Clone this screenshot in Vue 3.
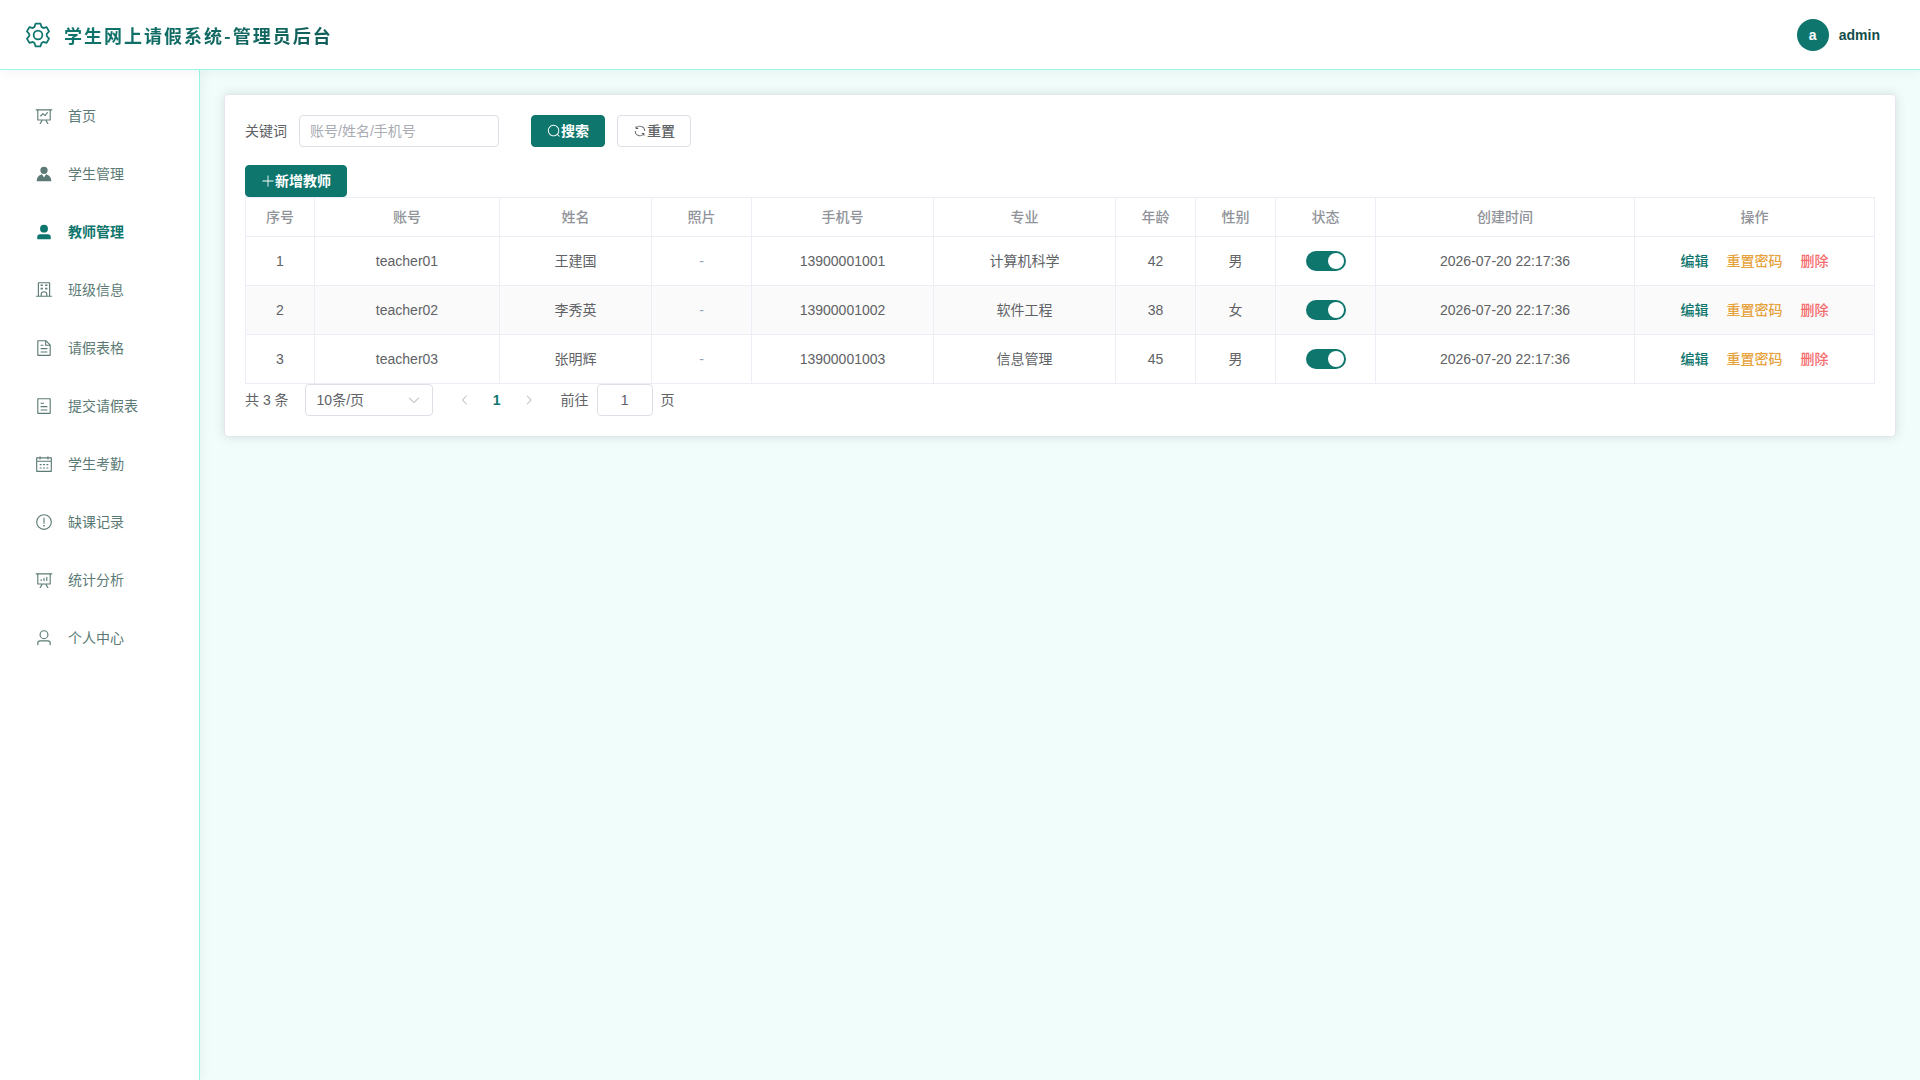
<script setup>
import { ref } from 'vue';

const icons = {
  setting: 'M600.704 64a32 32 0 0 1 30.464 22.208l35.2 109.376c14.784 7.232 28.928 15.36 42.432 24.512l112.384-24.192a32 32 0 0 1 34.432 15.36L944.32 364.8a32 32 0 0 1-4.032 37.504l-77.12 85.12a357.12 357.12 0 0 1 0 49.024l77.12 85.248a32 32 0 0 1 4.032 37.504l-88.704 153.6a32 32 0 0 1-34.432 15.296L708.8 803.904c-13.44 9.088-27.648 17.28-42.368 24.512l-35.264 109.376A32 32 0 0 1 600.704 960H423.296a32 32 0 0 1-30.464-22.208L357.696 828.48a351.616 351.616 0 0 1-42.56-24.64l-112.32 24.256a32 32 0 0 1-34.432-15.36L79.68 659.2a32 32 0 0 1 4.032-37.504l77.12-85.248a357.12 357.12 0 0 1 0-48.896l-77.12-85.248A32 32 0 0 1 79.68 364.8l88.704-153.6a32 32 0 0 1 34.432-15.296l112.32 24.256c13.568-9.152 27.776-17.408 42.56-24.64l35.2-109.312A32 32 0 0 1 423.232 64H600.64zm-23.424 64H446.72l-36.352 113.088-24.512 11.968a294.113 294.113 0 0 0-34.816 20.096l-22.656 15.36-116.224-25.088-65.28 113.152 79.68 88.192-1.92 27.136a293.12 293.12 0 0 0 0 40.192l1.92 27.136-79.808 88.192 65.344 113.152 116.224-25.024 22.656 15.296a294.113 294.113 0 0 0 34.816 20.096l24.512 11.968L446.72 896h130.688l36.48-113.152 24.448-11.904a288.282 288.282 0 0 0 34.752-20.096l22.592-15.296 116.288 25.024 65.28-113.152-79.744-88.192 1.92-27.136a293.12 293.12 0 0 0 0-40.256l-1.92-27.136 79.808-88.128-65.344-113.152-116.288 24.96-22.592-15.232a287.616 287.616 0 0 0-34.752-20.096l-24.448-11.904L577.344 128zM512 320a192 192 0 1 1 0 384 192 192 0 0 1 0-384zm0 64a128 128 0 1 0 0 256 128 128 0 0 0 0-256z',
  dataLine: 'M359.168 768H160a32 32 0 0 1-32-32V192H64a32 32 0 0 1 0-64h896a32 32 0 1 1 0 64h-64v544a32 32 0 0 1-32 32H665.216l110.848 192h-73.856L591.36 768H433.024L322.176 960H248.32l110.848-192zM832 192H192v512h640V192zM342.656 534.656a32 32 0 1 1-45.312-45.312L444.992 341.76l125.44 94.08L679.04 300.032a32 32 0 1 1 49.92 39.936L581.632 524.224 451.008 426.24 342.656 534.592z',
  avatar: 'M628.736 528.896A416 416 0 0 1 928 928H96a415.872 415.872 0 0 1 299.264-399.104L512 704l116.736-175.104zM720 304a208 208 0 1 1-416 0 208 208 0 0 1 416 0z',
  userFilled: 'M288 320a224 224 0 1 0 448 0 224 224 0 1 0-448 0zm544 608H160a32 32 0 0 1-32-32v-96a160 160 0 0 1 160-160h448a160 160 0 0 1 160 160v96a32 32 0 0 1-32 32z',
  school: 'M224 128v704h576V128H224zm-32-64h640a32 32 0 0 1 32 32v768a32 32 0 0 1-32 32H192a32 32 0 0 1-32-32V96a32 32 0 0 1 32-32zM64 832h896v64H64zm256-640h128v96H320zM384 832h256v-64a128 128 0 1 0-256 0zm128-256a192 192 0 0 1 192 192v128H320V768a192 192 0 0 1 192-192zM320 384h128v96H320zm256-192h128v96H576zm0 192h128v96H576z',
  document: 'M832 384H576V128H192v768h640V384zm-26.496-64L640 154.496V320h165.504zM160 64h480l256 256v608a32 32 0 0 1-32 32H160a32 32 0 0 1-32-32V96a32 32 0 0 1 32-32zm160 448h384v64H320v-64zm0-192h160v64H320v-64zm0 384h384v64H320v-64z',
  tickets: 'M192 128v768h640V128H192zm-32-64h704a32 32 0 0 1 32 32v832a32 32 0 0 1-32 32H160a32 32 0 0 1-32-32V96a32 32 0 0 1 32-32zm160 448h384v64H320v-64zm0-192h192v64H320v-64zm0 384h384v64H320v-64z',
  calendar: 'M128 384v512h768V192H768v32a32 32 0 1 1-64 0v-32H320v32a32 32 0 0 1-64 0v-32H128v128h768v64H128zm192-256h384V96a32 32 0 1 1 64 0v32h160a32 32 0 0 1 32 32v768a32 32 0 0 1-32 32H96a32 32 0 0 1-32-32V160a32 32 0 0 1 32-32h160V96a32 32 0 0 1 64 0v32zm-32 384h64a32 32 0 0 1 0 64h-64a32 32 0 0 1 0-64zm0 192h64a32 32 0 1 1 0 64h-64a32 32 0 1 1 0-64zm192-192h64a32 32 0 0 1 0 64h-64a32 32 0 0 1 0-64zm0 192h64a32 32 0 1 1 0 64h-64a32 32 0 1 1 0-64zm192-192h64a32 32 0 1 1 0 64h-64a32 32 0 1 1 0-64zm0 192h64a32 32 0 1 1 0 64h-64a32 32 0 1 1 0-64z',
  warning: 'M512 64a448 448 0 1 1 0 896 448 448 0 0 1 0-896zm0 832a384 384 0 0 0 0-768 384 384 0 0 0 0 768zm48-176a48 48 0 1 1-96 0 48 48 0 0 1 96 0zm-48-464a32 32 0 0 1 32 32v288a32 32 0 0 1-64 0V288a32 32 0 0 1 32-32z',
  dataAnalysis: 'M665.216 768l110.848 192h-73.856L591.36 768H433.024L322.176 960H248.32l110.848-192H160a32 32 0 0 1-32-32V192H64a32 32 0 0 1 0-64h896a32 32 0 1 1 0 64h-64v544a32 32 0 0 1-32 32H665.216zM832 192H192v512h640V192zM352 448a32 32 0 0 1 32 32v64a32 32 0 0 1-64 0v-64a32 32 0 0 1 32-32zm160-64a32 32 0 0 1 32 32v128a32 32 0 0 1-64 0V416a32 32 0 0 1 32-32zm160-64a32 32 0 0 1 32 32v192a32 32 0 1 1-64 0V352a32 32 0 0 1 32-32z',
  user: 'M512 512a192 192 0 1 0 0-384 192 192 0 0 0 0 384zm0 64a256 256 0 1 1 0-512 256 256 0 0 1 0 512zm320 320v-96a96 96 0 0 0-96-96H288a96 96 0 0 0-96 96v96a32 32 0 1 1-64 0v-96a160 160 0 0 1 160-160h448a160 160 0 0 1 160 160v96a32 32 0 1 1-64 0z',
  search: 'M795.904 750.72l124.992 124.928a32 32 0 0 1-45.248 45.248L750.656 795.904a416 416 0 1 1 45.248-45.248zM480 832a352 352 0 1 0 0-704 352 352 0 0 0 0 704z',
  refresh: 'M771.776 794.88A384 384 0 0 1 128 512h64a320 320 0 0 0 555.712 216.448H654.72a32 32 0 1 1 0-64h149.056a32 32 0 0 1 32 32v148.928a32 32 0 1 1-64 0v-50.56zM276.288 295.616h92.992a32 32 0 0 1 0 64H220.16a32 32 0 0 1-32-32V178.56a32 32 0 0 1 64 0v50.56A384 384 0 0 1 896.128 512h-64a320 320 0 0 0-555.776-216.384z',
  plus: 'M480 480V128a32 32 0 0 1 64 0v352h352a32 32 0 1 1 0 64H544v352a32 32 0 1 1-64 0V544H128a32 32 0 0 1 0-64h352z',
  arrowDown: 'M831.872 340.864 512 652.672 192.128 340.864a30.592 30.592 0 0 0-42.752 0 29.12 29.12 0 0 0 0 41.6L489.664 714.24a32 32 0 0 0 44.672 0l340.288-331.712a29.12 29.12 0 0 0 0-41.728 30.592 30.592 0 0 0-42.752 0z',
  arrowLeft: 'M609.408 149.376 277.76 489.6a32 32 0 0 0 0 44.672l331.648 340.352a29.12 29.12 0 0 0 41.728 0 30.592 30.592 0 0 0 0-42.752L339.264 511.936l311.872-319.872a30.592 30.592 0 0 0 0-42.688 29.12 29.12 0 0 0-41.728 0z',
  arrowRight: 'M340.864 149.312a30.592 30.592 0 0 0 0 42.752L652.736 512 340.864 831.872a30.592 30.592 0 0 0 0 42.752 29.12 29.12 0 0 0 41.728 0L714.24 534.336a32 32 0 0 0 0-44.672L382.592 149.376a29.12 29.12 0 0 0-41.728 0z'
};

const menus = [
  { name: '首页', icon: 'dataLine' },
  { name: '学生管理', icon: 'avatar' },
  { name: '教师管理', icon: 'userFilled' },
  { name: '班级信息', icon: 'school' },
  { name: '请假表格', icon: 'document' },
  { name: '提交请假表', icon: 'tickets' },
  { name: '学生考勤', icon: 'calendar' },
  { name: '缺课记录', icon: 'warning' },
  { name: '统计分析', icon: 'dataAnalysis' },
  { name: '个人中心', icon: 'user' }
];
const active = ref('教师管理');

const columns = [
  { label: '序号', width: 69 },
  { label: '账号', width: 185 },
  { label: '姓名', width: 152 },
  { label: '照片', width: 100 },
  { label: '手机号', width: 182 },
  { label: '专业', width: 182 },
  { label: '年龄', width: 80 },
  { label: '性别', width: 80 },
  { label: '状态', width: 100 },
  { label: '创建时间', width: 259 },
  { label: '操作', width: 240 }
];

const teachers = ref([
  { account: 'teacher01', name: '王建国', phone: '13900001001', major: '计算机科学', age: 42, gender: '男', enabled: true, created: '2026-07-20 22:17:36' },
  { account: 'teacher02', name: '李秀英', phone: '13900001002', major: '软件工程', age: 38, gender: '女', enabled: true, created: '2026-07-20 22:17:36' },
  { account: 'teacher03', name: '张明辉', phone: '13900001003', major: '信息管理', age: 45, gender: '男', enabled: true, created: '2026-07-20 22:17:36' }
]);

const keyword = ref('');
const pageSize = ref(10);
const page = ref(1);

const resetSearch = () => {
  keyword.value = '';
};

const removeTeacher = (index) => {
  teachers.value.splice(index, 1);
};
</script>

<template>
  <div class="layout">
    <header class="header">
      <div class="brand">
        <svg class="brand-icon" viewBox="0 0 1024 1024"><path :d="icons.setting" /></svg>
        <h1>学生网上请假系统-管理员后台</h1>
      </div>
      <div class="account">
        <span class="avatar">a</span>
        <span class="username">admin</span>
      </div>
    </header>

    <div class="body">
      <nav class="sidebar">
        <a
          v-for="menu in menus"
          :key="menu.name"
          href="#"
          class="menu-item"
          :class="{ active: menu.name === active }"
          @click.prevent="active = menu.name"
        >
          <svg viewBox="0 0 1024 1024"><path :d="icons[menu.icon]" /></svg>
          <span>{{ menu.name }}</span>
        </a>
      </nav>

      <main class="main">
        <section class="card">
          <form class="search" @submit.prevent>
            <label for="keyword">关键词</label>
            <input id="keyword" v-model="keyword" class="field" type="text" placeholder="账号/姓名/手机号">
            <button type="submit" class="btn primary">
              <svg viewBox="0 0 1024 1024"><path :d="icons.search" /></svg>搜索
            </button>
            <button type="button" class="btn" @click="resetSearch">
              <svg viewBox="0 0 1024 1024"><path :d="icons.refresh" /></svg>重置
            </button>
          </form>

          <div class="toolbar">
            <button type="button" class="btn primary">
              <svg viewBox="0 0 1024 1024"><path :d="icons.plus" /></svg>新增教师
            </button>
          </div>

          <table class="table">
            <colgroup>
              <col v-for="col in columns" :key="col.label" :style="{ width: col.width + 'px' }">
            </colgroup>
            <thead>
              <tr>
                <th v-for="col in columns" :key="col.label">{{ col.label }}</th>
              </tr>
            </thead>
            <tbody>
              <tr v-for="(row, index) in teachers" :key="row.account">
                <td>{{ index + 1 }}</td>
                <td>{{ row.account }}</td>
                <td>{{ row.name }}</td>
                <td class="empty">-</td>
                <td>{{ row.phone }}</td>
                <td>{{ row.major }}</td>
                <td>{{ row.age }}</td>
                <td>{{ row.gender }}</td>
                <td>
                  <input v-model="row.enabled" class="switch" type="checkbox" role="switch" :aria-label="row.name">
                </td>
                <td>{{ row.created }}</td>
                <td>
                  <div class="actions">
                    <button type="button" class="link edit">编辑</button>
                    <button type="button" class="link warn">重置密码</button>
                    <button type="button" class="link danger" @click="removeTeacher(index)">删除</button>
                  </div>
                </td>
              </tr>
            </tbody>
          </table>

          <div class="pagination">
            <span class="total">共 {{ teachers.length }} 条</span>
            <div class="select">
              <select v-model="pageSize" class="field" aria-label="10条/页">
                <option :value="10">10条/页</option>
                <option :value="20">20条/页</option>
                <option :value="50">50条/页</option>
              </select>
              <svg viewBox="0 0 1024 1024"><path :d="icons.arrowDown" /></svg>
            </div>
            <div class="pager">
              <button type="button" disabled>
                <svg viewBox="0 0 1024 1024"><path :d="icons.arrowLeft" /></svg>
              </button>
              <button type="button" class="current">1</button>
              <button type="button" disabled>
                <svg viewBox="0 0 1024 1024"><path :d="icons.arrowRight" /></svg>
              </button>
            </div>
            <div class="jump">
              <label for="page">前往</label>
              <input id="page" v-model="page" class="field" type="text">
              <span>页</span>
            </div>
          </div>
        </section>
      </main>
    </div>
  </div>
</template>

<style>
body {
  margin: 0;
}
</style>

<style scoped>
.layout {
  display: flex;
  flex-direction: column;
  min-height: 100vh;
  background-color: #f0fdfa;
  color: #606266;
  font-family: "Liberation Sans", "Noto Sans CJK SC", sans-serif;
  font-size: 14px;
  line-height: 22px;
}

.layout * {
  box-sizing: border-box;
}

button,
input,
select {
  margin: 0;
  font: inherit;
  color: inherit;
}

button {
  cursor: pointer;
}

svg {
  flex: none;
  width: 14px;
  height: 14px;
  fill: currentColor;
}

.header {
  position: relative;
  z-index: 2;
  display: flex;
  align-items: center;
  justify-content: space-between;
  height: 70px;
  padding: 0 40px 0 24px;
  background-color: #fff;
  border-bottom: 1px solid #99f6e4;
  box-shadow: 0 2px 12px rgba(0, 0, 0, 0.05);
}

.brand {
  display: flex;
  align-items: center;
  gap: 12px;
}

.brand-icon {
  width: 28px;
  height: 28px;
  color: #0f766e;
}

h1 {
  margin: 0;
  font-family: "Noto Sans CJK SC", sans-serif;
  font-size: 18px;
  font-weight: 700;
  line-height: 28px;
  letter-spacing: 2px;
  color: transparent;
  background: linear-gradient(135deg, #0f766e, #115e59);
  background-clip: text;
}

.account {
  display: flex;
  align-items: center;
  gap: 10px;
  font-weight: 700;
}

.avatar {
  width: 32px;
  border-radius: 50%;
  background-color: #0f766e;
  color: #fff;
  line-height: 32px;
  text-align: center;
}

.username {
  color: #134e4a;
}

.body {
  display: flex;
  flex: 1;
}

.sidebar {
  display: flex;
  flex: none;
  flex-direction: column;
  gap: 8px;
  width: 200px;
  padding: 21px 12px;
  background-color: #fff;
  border-right: 1px solid #99f6e4;
  box-shadow: 2px 0 12px rgba(0, 0, 0, 0.05);
}

.menu-item {
  display: flex;
  align-items: center;
  gap: 15px;
  height: 50px;
  padding: 0 23px;
  color: #5b7a75;
  text-decoration: none;
}

.menu-item svg {
  width: 18px;
  height: 18px;
}

.menu-item.active {
  color: #0f766e;
  font-weight: 700;
}

.main {
  flex: 1;
  min-width: 0;
  padding: 24px;
}

.card {
  padding: 20px;
  background-color: #fff;
  border: 1px solid #e4e7ed;
  border-radius: 4px;
  box-shadow: 0 0 12px rgba(0, 0, 0, 0.12);
}

.search {
  display: flex;
  align-items: center;
  gap: 12px;
  margin-bottom: 18px;
}

.field {
  height: 32px;
  padding: 0 10px;
  border: 1px solid #dcdfe6;
  border-radius: 4px;
  background-color: #fff;
  outline: none;
}

.field::placeholder {
  color: #a8abb2;
}

.search .field {
  width: 200px;
  margin-right: 20px;
}

.btn {
  display: inline-flex;
  align-items: center;
  height: 32px;
  padding: 0 15px;
  border: 1px solid #dcdfe6;
  border-radius: 4px;
  background-color: #fff;
  font-weight: 500;
}

.btn.primary {
  border-color: #0f766e;
  background-color: #0f766e;
  color: #fff;
  font-weight: 700;
}

.toolbar {
  display: flex;
}

.table {
  width: 100%;
  table-layout: fixed;
  border-spacing: 0;
  border-top: 1px solid #ebeef5;
  border-left: 1px solid #ebeef5;
  text-align: center;
}

th,
td {
  padding: 0;
  border-right: 1px solid #ebeef5;
  border-bottom: 1px solid #ebeef5;
}

th {
  height: 39px;
  color: #909399;
  font-weight: 500;
}

td {
  height: 49px;
}

tbody tr:nth-child(even) td {
  background-color: #fafafa;
}

.table .empty {
  color: #94a3b8;
}

.switch {
  display: block;
  width: 40px;
  height: 20px;
  margin: 0 auto;
  padding: 2px;
  border-radius: 10px;
  background-color: #dcdfe6;
  appearance: none;
  cursor: pointer;
}

.switch::before {
  content: '';
  display: block;
  width: 16px;
  height: 16px;
  border-radius: 50%;
  background-color: #fff;
}

.switch:checked {
  background-color: #0f766e;
}

.switch:checked::before {
  margin-left: auto;
}

.actions {
  display: flex;
  justify-content: center;
  gap: 18px;
}

.link {
  padding: 0;
  border: none;
  background: none;
  font-weight: 500;
}

.link.edit {
  color: #0f766e;
}

.link.warn {
  color: #e6a23c;
}

.link.danger {
  color: #f56c6c;
}

.pagination {
  display: flex;
  align-items: center;
  gap: 16px;
}

.select {
  position: relative;
  width: 128px;
}

.select .field {
  display: block;
  width: 100%;
  padding: 0 11px;
  appearance: none;
}

.select svg {
  position: absolute;
  top: 9px;
  right: 12px;
  color: #a8abb2;
  pointer-events: none;
}

.pager {
  display: flex;
}

.pager button {
  display: flex;
  align-items: center;
  justify-content: center;
  width: 32px;
  height: 32px;
  padding: 0;
  border: none;
  background: none;
}

.pager button:disabled {
  color: #a8abb2;
}

.pager svg {
  width: 12px;
  height: 12px;
}

.pager .current {
  color: #0f766e;
  font-weight: 700;
}

.jump {
  display: flex;
  align-items: center;
  gap: 8px;
}

.jump .field {
  width: 56px;
  text-align: center;
}
</style>
